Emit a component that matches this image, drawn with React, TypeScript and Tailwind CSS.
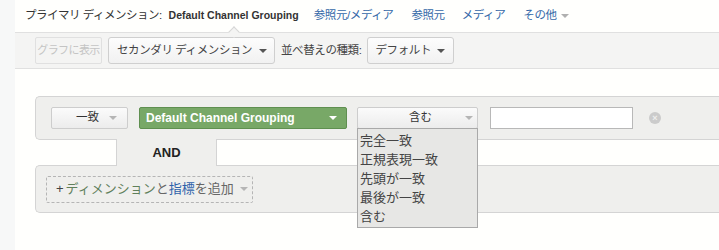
import React from 'react';

const jp = "font-['Liberation_Sans','Noto_Sans_CJK_JP',sans-serif]";

const Caret: React.FC<{ color: string }> = ({ color }) => (
  <span
    className="inline-block h-0 w-0 border-x-[4px] border-t-[4px] border-x-transparent"
    style={{ borderTopColor: color }}
  />
);

const matchOptions = ['完全一致', '正規表現一致', '先頭が一致', '最後が一致', '含む'];

export default function App() {
  return (
    <div className={`flex h-[250px] w-[719px] overflow-hidden bg-[#fffffd] ${jp}`}>
      <div className="w-[15px] shrink-0 bg-[#f7f8f8]" />
      <div className="flex-1 min-w-0">
        {/* primary dimension row */}
        <div className="flex h-[32px] items-center whitespace-nowrap pl-[10px] text-[11.5px] text-[#333]">
          <span className="tracking-[-0.5px]">プライマリ ディメンション:</span>
          <span className="ml-[7px] font-['Liberation_Sans',sans-serif] text-[10.5px] font-bold text-[#333]">
            Default Channel Grouping
          </span>
          <a className="ml-[15px] tracking-[-0.4px] text-[#3468a8]">参照元/メディア</a>
          <a className="ml-[18px] tracking-[-0.4px] text-[#3468a8]">参照元</a>
          <a className="ml-[17px] tracking-[-0.4px] text-[#3468a8]">メディア</a>
          <a className="ml-[18px] flex items-center gap-[4px] tracking-[-0.4px] text-[#3468a8]">
            その他 <Caret color="#b0b0b0" />
          </a>
        </div>

        {/* toolbar */}
        <div className="relative flex h-[37px] items-center whitespace-nowrap border-y border-[#e0e0e0] bg-[#f4f4f3] pl-[20px] text-[11.5px] text-[#444]">
          <span className="absolute left-[215px] top-[-5px] h-[8px] w-[8px] rotate-45 border-l border-t border-[#d6d6d6] bg-[#f4f4f3]" />
          <button className="flex h-[27px] w-[67px] items-center justify-center overflow-hidden rounded-[2px] border border-[#e0e0e0] bg-[#f4f4f3] text-[11px] tracking-[-0.6px] text-[#c4c4c4]">
            グラフに表示
          </button>
          <button className="ml-[6px] flex h-[27px] w-[167px] items-center justify-between rounded-[3px] border border-[#cfcfcf] bg-linear-to-b from-[#fdfdfd] to-[#f1f1f1] pl-[8px] pr-[7px] tracking-[-0.4px]">
            <span>セカンダリ ディメンション</span>
            <Caret color="#555" />
          </button>
          <span className="ml-[6px] tracking-[-0.4px]">並べ替えの種類:</span>
          <button className="ml-[5px] flex h-[27px] w-[87px] items-center justify-between rounded-[3px] border border-[#cfcfcf] bg-linear-to-b from-[#fdfdfd] to-[#f1f1f1] pl-[8px] pr-[8px] tracking-[-0.4px]">
            <span>デフォルト</span>
            <Caret color="#555" />
          </button>
        </div>

        {/* filter builder */}
        <div className="ml-[20px] mt-[27px]">
          <div className="flex h-[44px] items-center rounded-l-[5px] border border-r-0 border-[#d4d4d4] bg-[#efefed] pl-[15px]">
            <button className="flex h-[22px] w-[77px] items-center justify-end gap-[10px] rounded-[2px] border border-[#cdcdcd] bg-linear-to-b from-[#fbfbfb] to-[#ececec] pr-[10px] text-[11.5px] text-[#333]">
              <span>一致</span>
              <Caret color="#b5b5b5" />
            </button>
            <button className="ml-[11px] flex h-[22px] w-[208px] items-center justify-between rounded-[2px] border border-[#5f8f50] bg-[#78a867] pl-[6px] pr-[9px] font-['Liberation_Sans',sans-serif] text-[12px] font-bold text-white">
              <span>Default Channel Grouping</span>
              <Caret color="#ffffff" />
            </button>
            <div className="relative ml-[10px]">
              <button className="flex h-[22px] w-[121px] items-center rounded-[2px] border border-[#cdcdcd] bg-linear-to-b from-[#fbfbfb] to-[#ececec] pl-[51px] text-[11.5px] text-[#333]">
                <span>含む</span>
                <span className="ml-[33px] flex">
                  <Caret color="#b5b5b5" />
                </span>
              </button>
              <div className="absolute left-0 top-full z-20 -mt-px w-[121px] border border-[#a9a9a9] bg-[#e7e7e5] pb-[1px] pl-[2px] pt-[2px] text-[13px] leading-[19px] text-[#444]">
                {matchOptions.map(o => (
                  <div key={o}>{o}</div>
                ))}
              </div>
            </div>
            <input className="ml-[12px] h-[22px] w-[143px] border border-[#b8b8b8] bg-white outline-none" />
            <span className="ml-[16px] flex h-[12px] w-[12px] items-center justify-center rounded-full bg-[#cbcbcb] text-[9px] font-bold leading-none text-[#efefed]">
              ×
            </span>
          </div>

          <div className="relative z-10 -my-px ml-[81px] flex h-[27px] w-[101px] items-center justify-center border-x border-[#d4d4d4] bg-[#efefed] font-['Liberation_Sans',sans-serif] text-[13px] font-bold text-[#222]">
            AND
          </div>

          <div className="flex h-[48px] items-center rounded-l-[5px] border border-r-0 border-[#d4d4d4] bg-[#efefed] pl-[10px]">
            <button className="flex h-[27px] w-[207px] items-center rounded-[2px] border border-dashed border-[#b5b5b5] pl-[9px] text-[13px]">
              <span className="mr-[2px] text-[#444]">+</span>
              <span className="text-[#5f805b]">ディメンション</span>
              <span className="text-[#666]">と</span>
              <span className="text-[#2e62aa]">指標</span>
              <span className="text-[#666]">を追加</span>
              <span className="ml-[6px] flex">
                <Caret color="#b5b5b5" />
              </span>
            </button>
          </div>
        </div>
      </div>
    </div>
  );
}
